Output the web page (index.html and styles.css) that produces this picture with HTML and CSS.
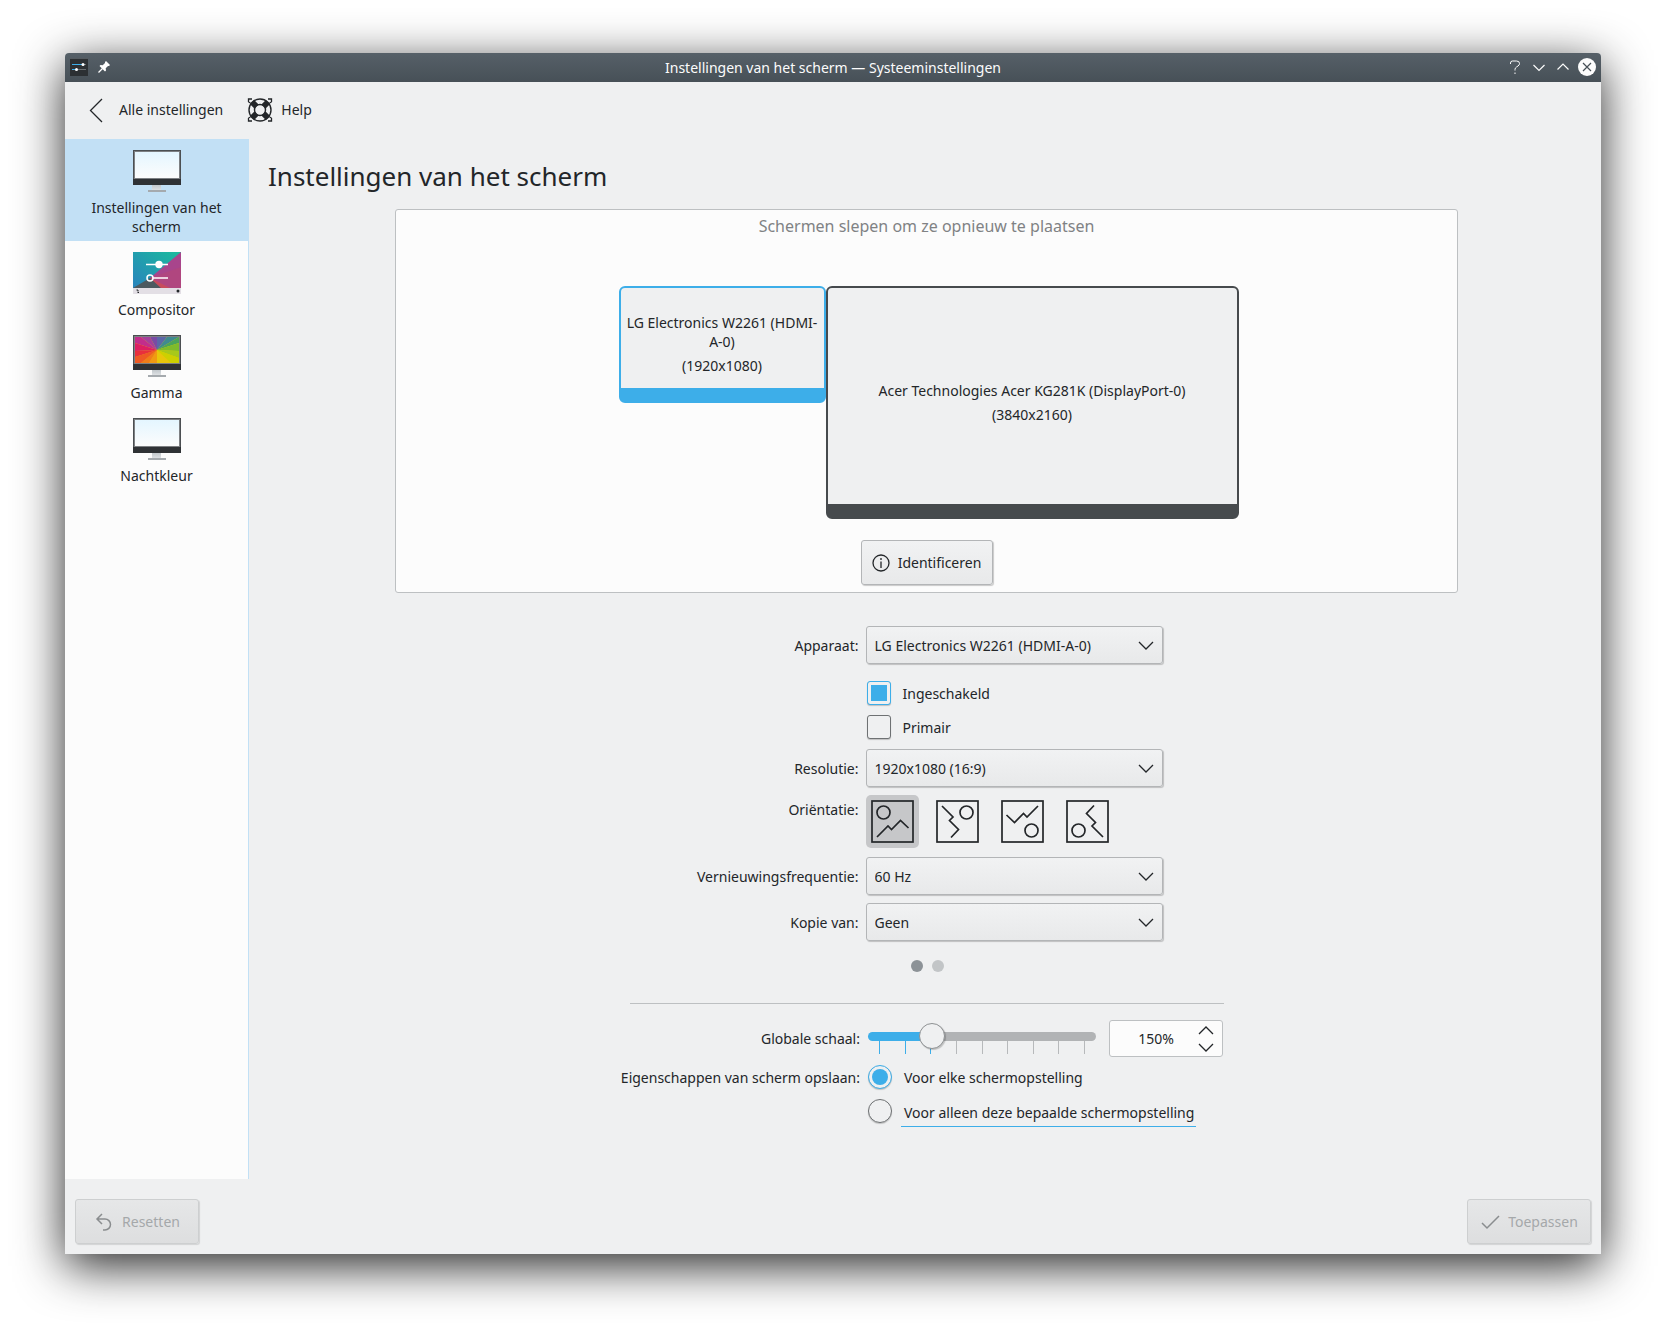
FILE: index.html
```html
<!DOCTYPE html>
<html lang="nl">
<head>
  <meta charset="UTF-8">
  <title>Instellingen van het scherm — Systeeminstellingen</title>
  <link rel="stylesheet" href="styles.css">
</head>
<body>

  <!-- Shared icon shapes -->
  <svg class="defs" aria-hidden="true">
    <defs>
      <linearGradient id="screenGlow" x1="0" y1="0" x2="0" y2="1">
        <stop offset="0" stop-color="#e4f6ff"/>
        <stop offset="1" stop-color="#fcfcfc"/>
      </linearGradient>
      <linearGradient id="stand" x1="0" y1="0" x2="0" y2="1">
        <stop offset="0" stop-color="#bdc3c7"/>
        <stop offset="1" stop-color="#dde0e3"/>
      </linearGradient>
      <linearGradient id="teal" x1="0" y1="1" x2="1" y2="0">
        <stop offset="0" stop-color="#2a7fc0"/>
        <stop offset="1" stop-color="#1abc9c"/>
      </linearGradient>
    </defs>
    <symbol id="monitor" viewBox="0 0 48 48">
      <rect x="19" y="37" width="9" height="6" fill="url(#stand)"/>
      <rect x="15" y="43" width="18" height="2" fill="#a5aaae"/>
      <rect x="0" y="3" width="48" height="35" fill="#2f3235"/>
      <rect x="0" y="3" width="48" height="29" fill="#4b4f52"/>
      <rect x="1" y="4" width="46" height="28" fill="#7d8083"/>
      <rect x="2" y="5" width="44" height="26" fill="url(#screenGlow)"/>
    </symbol>
  </svg>

  <div class="window">
    <header class="titlebar">
      <div class="titlebar-side">
        <svg width="18" height="18" viewBox="0 0 18 18">
          <rect width="18" height="18" fill="#2c3033"/>
          <rect width="18" height="1" fill="#555b60"/>
          <path d="M2 6.500h10M2 11.500h4" stroke="#3daee9" stroke-width="1.200"/>
          <path d="M14 6.500h2M8 11.500h8" stroke="#6a6e71"/>
          <circle cx="13" cy="6.500" r="1.500" fill="#fff"/>
          <circle cx="6.500" cy="11.500" r="1.500" fill="#fff"/>
        </svg>
        <svg width="12" height="12" viewBox="0 0 12 12">
          <path d="M8 0l4 4-1 1-1 0-2.300 2.300.3 2.200-1 1L1.500 5l1-1 2.200.3L7 2V1z" fill="#fff"/>
          <path d="M4.500 7.500L.5 11.500" stroke="#fff" stroke-width="1.200"/>
        </svg>
      </div>
      <div class="titlebar-title">Instellingen van het scherm — Systeeminstellingen</div>
      <div class="titlebar-side titlebar-buttons">
        <button type="button" aria-label="Help">
          <svg width="18" height="18" viewBox="0 0 18 18" fill="none" stroke="#fcfcfc"><path d="M4.500 6V5q0-2 2-2h4q3 0 3 2.500 0 1.500-1.500 2.500l-1.500 1q-1.500.8-1.500 2.500v1M9 14.500v1.500"/></svg>
        </button>
        <button type="button" aria-label="Minimaliseren">
          <svg width="18" height="18" viewBox="0 0 18 18" fill="none" stroke="#fcfcfc" stroke-width="1.200"><path d="M3.500 7L9 12.500 14.500 7"/></svg>
        </button>
        <button type="button" aria-label="Maximaliseren">
          <svg width="18" height="18" viewBox="0 0 18 18" fill="none" stroke="#fcfcfc" stroke-width="1.200"><path d="M3.500 11.500L9 6l5.500 5.500"/></svg>
        </button>
        <button type="button" aria-label="Sluiten">
          <svg width="18" height="18" viewBox="0 0 18 18"><circle cx="9" cy="9" r="9" fill="#fcfcfc"/><path d="M5 5l8 8M13 5l-8 8" stroke="#475057" stroke-width="1.200"/></svg>
        </button>
      </div>
    </header>

    <nav class="toolbar">
      <button type="button" class="tool">
        <svg width="26" height="26" viewBox="0 0 26 26" fill="none" stroke="#232629" stroke-width="1.300"><path d="M17 2L5.500 13.500 17 25"/></svg>
        Alle instellingen
      </button>
      <button type="button" class="tool">
        <svg width="26" height="26" viewBox="0 0 26 26" fill="none" stroke="#232629">
          <circle cx="13" cy="13" r="11" stroke-width="1.400"/>
          <circle cx="13" cy="13" r="5.500" stroke-width="1.400"/>
          <path d="M5 5l4.500 4.500M21 5l-4.500 4.500M21 21l-4.500-4.500M5 21l4.500-4.500" stroke-width="6"/>
          <path d="M1.500 5V2H5M21 2h3.500v3M24.500 21v3H21M5 24H1.500v-3M1.500 5l2 1M24.500 5l-2 1M24.500 21l-2-1M1.500 21l2-1" stroke-width="1.300"/>
        </svg>
        Help
      </button>
    </nav>

    <div class="body">
      <ul class="sidebar">
        <li><a href="#" class="module active">
          <svg width="48" height="48"><use href="#monitor"/></svg>
          Instellingen van het scherm
        </a></li>
        <li><a href="#" class="module">
          <svg width="48" height="48" viewBox="0 0 48 48">
            <rect x="0" y="3" width="48" height="42" fill="url(#teal)"/>
            <path d="M48 3v42H29L17 29z" fill="#a8458c"/>
            <path d="M48 18v27H29L17 29z" fill="#b0467f"/>
            <path d="M17 29l22 11H26z" fill="#c84c5c"/>
            <path d="M0 39l17-10 12 11H0z" fill="#4d5a60"/>
            <rect x="0" y="39" width="48" height="6" fill="#e3dfe5"/>
            <path d="M3.500 41h1.500v1.500M4.500 43.500h1.500" fill="none" stroke="#232629"/>
            <circle cx="45" cy="42" r="1.500" fill="#232629"/>
            <path d="M13 15.500h22M20 29h15" stroke="#fff" stroke-width="1.500"/>
            <circle cx="26" cy="15.500" r="3.700" fill="#fff"/>
            <circle cx="17" cy="29" r="3" fill="none" stroke="#fff" stroke-width="1.500"/>
          </svg>
          Compositor
        </a></li>
        <li><a href="#" class="module">
          <svg width="48" height="48" viewBox="0 0 48 48">
            <use href="#monitor"/>
            <rect x="2" y="5" width="44" height="26" fill="#e9c60a"/>
            <path d="M24 18L2 11V5h6z" fill="#c22d8c"/>
            <path d="M24 18L8 5h9z" fill="#a5409c"/>
            <path d="M24 18L17 5h7z" fill="#7a4aa5"/>
            <path d="M24 18V5h10z" fill="#5b67a8"/>
            <path d="M24 18L34 5h12z" fill="#3f8a90"/>
            <path d="M24 18L46 5v6z" fill="#4ba45a"/>
            <path d="M24 18l22-7v8z" fill="#7fbb2c"/>
            <path d="M24 18l22 1v7z" fill="#a8c81a"/>
            <path d="M24 18l22 8v5H38z" fill="#cdd000"/>
            <path d="M24 18v13h-8z" fill="#f09a12"/>
            <path d="M24 18l-8 13H8z" fill="#ef7d1a"/>
            <path d="M24 18L8 31H2v-6z" fill="#ee5a24"/>
            <path d="M24 18L2 25v-6z" fill="#e8303c"/>
            <path d="M24 18L2 19v-8z" fill="#dd1f63"/>
          </svg>
          Gamma
        </a></li>
        <li><a href="#" class="module">
          <svg width="48" height="48"><use href="#monitor"/></svg>
          Nachtkleur
        </a></li>
      </ul>

      <main class="content">
        <h1>Instellingen van het scherm</h1>

        <section class="preview">
          <p class="hint">Schermen slepen om ze opnieuw te plaatsen</p>
          <div class="outputs">
            <div class="output output-small selected">
              <p>LG Electronics W2261 (HDMI-A-0)</p>
              <p>(1920x1080)</p>
            </div>
            <div class="output output-large">
              <p>Acer Technologies Acer KG281K (DisplayPort-0)</p>
              <p>(3840x2160)</p>
            </div>
          </div>
          <button type="button" class="button identify">
            <svg width="18" height="18" viewBox="0 0 18 18" fill="none" stroke="#232629" stroke-width="1.300"><circle cx="9" cy="9" r="8"/><path d="M9 7.500V14M9 4v2"/></svg>
            Identificeren
          </button>
        </section>

        <form class="output-form">
          <label for="device">Apparaat:</label>
          <select id="device"><option>LG Electronics W2261 (HDMI-A-0)</option></select>

          <div class="checks">
            <label class="option"><input type="checkbox" checked>Ingeschakeld</label>
            <label class="option"><input type="checkbox">Primair</label>
          </div>

          <label for="resolution">Resolutie:</label>
          <select id="resolution"><option>1920x1080 (16:9)</option></select>

          <span class="top-label" id="orientationLabel">Oriëntatie:</span>
          <div class="orientations" role="group" aria-labelledby="orientationLabel">
            <button type="button" class="pressed" aria-label="Normaal">
              <svg width="43" height="43" viewBox="0 0 43 43"><g id="landscape" fill="none" stroke="#232629" stroke-width="1.700"><rect x="1" y="1" width="41" height="41"/><circle cx="12.500" cy="12.500" r="6.500"/><path d="M6 37l11-11 3.500 3.500 9-9 8 7.500"/></g></svg>
            </button>
            <button type="button" aria-label="90° rechtsom">
              <svg width="43" height="43" viewBox="0 0 43 43"><use href="#landscape" transform="rotate(90 21.500 21.500)"/></svg>
            </button>
            <button type="button" aria-label="Ondersteboven">
              <svg width="43" height="43" viewBox="0 0 43 43"><use href="#landscape" transform="rotate(180 21.500 21.500)"/></svg>
            </button>
            <button type="button" aria-label="90° linksom">
              <svg width="43" height="43" viewBox="0 0 43 43"><use href="#landscape" transform="rotate(270 21.500 21.500)"/></svg>
            </button>
          </div>

          <label for="refresh">Vernieuwingsfrequentie:</label>
          <select id="refresh"><option>60 Hz</option></select>

          <label for="replica">Kopie van:</label>
          <select id="replica"><option>Geen</option></select>
        </form>

        <div class="pages">
          <span class="dot current"></span>
          <span class="dot"></span>
        </div>

        <form class="global-form">
          <label for="scale">Globale schaal:</label>
          <div class="scale-row">
            <div class="slider">
              <input type="range" id="scale" min="100" max="300" step="25" value="150">
              <div class="ticks">
                <i class="on"></i><i class="on"></i><i class="on"></i><i></i><i></i><i></i><i></i><i></i><i></i>
              </div>
            </div>
            <div class="spinbox">
              <input type="text" value="150%" aria-label="Schaal">
              <div class="spin-buttons">
                <button type="button" aria-label="Omhoog"><svg width="16" height="9" viewBox="0 0 16 9"><path d="M1 8l7-7 7 7" fill="none" stroke="#232629" stroke-width="1.300"/></svg></button>
                <button type="button" aria-label="Omlaag"><svg width="16" height="9" viewBox="0 0 16 9"><path d="M1 1l7 7 7-7" fill="none" stroke="#232629" stroke-width="1.300"/></svg></button>
              </div>
            </div>
          </div>

          <span class="top-label" id="retentionLabel">Eigenschappen van scherm opslaan:</span>
          <div class="radios" role="radiogroup" aria-labelledby="retentionLabel">
            <label class="option"><input type="radio" name="retention" checked><span>Voor elke schermopstelling</span></label>
            <label class="option"><input type="radio" name="retention"><span class="focused">Voor alleen deze bepaalde schermopstelling</span></label>
          </div>
        </form>
      </main>
    </div>

    <footer class="footer">
      <button type="button" class="button" disabled>
        <svg width="20" height="20" viewBox="0 0 20 20" fill="none" stroke="#8a8d8f" stroke-width="1.500"><path d="M8 2L3 7l5 5M3 7h8a5.500 5.500 0 0 1 0 11H9"/></svg>
        Resetten
      </button>
      <button type="button" class="button" disabled>
        <svg width="20" height="20" viewBox="0 0 20 20" fill="none" stroke="#8a8d8f" stroke-width="1.500"><path d="M2 11l5 5L19 4"/></svg>
        Toepassen
      </button>
    </footer>
  </div>

</body>
</html>
```

FILE: styles.css
```css
* {
  box-sizing: border-box;
}

body {
  margin: 0;
  padding: 53px 65px 77px;
  background-color: #fff;
  color: #232629;
  font-family: "Noto Sans", sans-serif;
  font-size: 14px;
  line-height: 19px;
}

h1, p, ul {
  margin: 0;
  padding: 0;
}

button, input, select {
  font: inherit;
  color: inherit;
}

svg {
  display: block;
  flex: none;
}

.defs {
  position: absolute;
  width: 0;
  height: 0;
}

.window {
  display: flex;
  flex-direction: column;
  min-height: calc(100vh - 130px);
  background-color: #eff0f1;
  border-radius: 4px 4px 0 0;
  box-shadow: 0 12px 48px rgba(0, 0, 0, 0.85);
}

/* Title bar */
.titlebar {
  display: flex;
  align-items: center;
  height: 29px;
  padding: 0 5px 1px;
  border-radius: 4px 4px 0 0;
  background: linear-gradient(#566068, #475057);
  color: #fcfcfc;
}

.titlebar-side {
  display: flex;
  align-items: center;
  gap: 10px;
  width: 120px;
}

.titlebar-title {
  flex: 1;
  text-align: center;
}

.titlebar-buttons {
  justify-content: flex-end;
  gap: 6px;
}

.titlebar-buttons button {
  padding: 0;
  border: none;
  background: none;
}

/* Toolbar */
.toolbar {
  display: flex;
  align-items: center;
  gap: 24px;
  height: 57px;
  padding: 0 20px 2px;
}

.tool {
  display: flex;
  align-items: center;
  gap: 8px;
  padding: 0;
  border: none;
  background: none;
}

.body {
  display: flex;
  flex: 1;
}

/* Sidebar */
.sidebar {
  width: 184px;
  flex: none;
  list-style: none;
  background-color: #fcfcfc;
  border-right: 1px solid #c2e0f5;
}

.module {
  display: flex;
  flex-direction: column;
  align-items: center;
  gap: 3px;
  padding: 8px 20px 5px;
  text-align: center;
  text-decoration: none;
  color: inherit;
}

.module.active {
  background-color: #c2e0f5;
}

/* Content */
.content {
  flex: 1;
  padding: 19px 15px 20px 19px;
}

h1 {
  font-size: 26px;
  line-height: 36px;
  font-weight: normal;
}

.preview {
  display: flex;
  flex-direction: column;
  align-items: center;
  margin: 15px 128px 0 127px;
  padding: 5px 0 7px;
  background-color: #fcfcfc;
  border: 1px solid #bdc0c2;
  border-radius: 3px;
}

.hint {
  font-size: 16px;
  line-height: 22px;
  color: #808284;
}

.outputs {
  display: flex;
  align-items: flex-start;
  margin: 49px 0 21px 4px;
}

.output {
  display: flex;
  flex-direction: column;
  justify-content: center;
  gap: 5px;
  padding: 12px 6px 0;
  background-color: #eff0f1;
  border: 2px solid #464a4d;
  border-bottom-width: 15px;
  border-radius: 6px;
  text-align: center;
}

.output-small {
  width: 207px;
  height: 117px;
}

.output-large {
  width: 413px;
  height: 233px;
}

.output.selected {
  border-color: #3daee9;
}

/* Buttons */
.button {
  display: flex;
  align-items: center;
  justify-content: center;
  gap: 8px;
  height: 45px;
  min-width: 124px;
  padding: 0 10px;
  border: 1px solid #b3b5b7;
  border-radius: 3px;
  background: linear-gradient(#f1f2f3, #e8e9ea);
  box-shadow: 1px 1px 1px rgba(0, 0, 0, 0.2);
}

.button:disabled {
  color: #a5a8aa;
  border-color: #cdcfd0;
  background: linear-gradient(#e6e7e8, #dddedf);
  box-shadow: 1px 1px 1px rgba(0, 0, 0, 0.12);
}

.identify {
  width: 132px;
}

/* Output settings */
.output-form {
  display: grid;
  grid-template-columns: 167px 297px;
  column-gap: 7px;
  row-gap: 8px;
  align-items: center;
  justify-content: center;
  margin-top: 33px;
}

.output-form > label,
.output-form > .top-label,
.global-form > label,
.global-form > .top-label {
  justify-self: end;
  white-space: nowrap;
}

.output-form > .top-label {
  align-self: start;
  padding-top: 5px;
}

select {
  width: 100%;
  height: 38px;
  padding: 0 8px;
  appearance: none;
  border: 1px solid #b3b5b7;
  border-radius: 3px;
  background: url('data:image/svg+xml,<svg xmlns="http://www.w3.org/2000/svg" width="16" height="10" fill="none" stroke="%23232629" stroke-width="1.300"><path d="M1 1l7 7 7-7"/></svg>') no-repeat right 8px top 14px, linear-gradient(#f1f2f3, #e8e9ea);
  box-shadow: 1px 1px 1px rgba(0, 0, 0, 0.2);
}

.checks {
  grid-column: 2;
  display: flex;
  flex-direction: column;
  gap: 10px;
  padding: 9px 1px 2px;
}

.option {
  display: flex;
  align-items: center;
  gap: 12px;
}

input[type="checkbox"],
input[type="radio"] {
  width: 24px;
  height: 24px;
  margin: 0;
  appearance: none;
  border: 1px solid #6e7173;
  border-radius: 3px;
  background-color: #eff0f1;
  box-shadow: 0 1px 1px rgba(0, 0, 0, 0.2);
}

input[type="radio"] {
  border-radius: 50%;
}

input[type="checkbox"]:checked,
input[type="radio"]:checked {
  border-color: #3daee9;
  padding: 3px;
  background-color: #3daee9;
  background-clip: content-box;
}

.orientations {
  display: flex;
  gap: 12px;
  padding-bottom: 1px;
}

.orientations button {
  padding: 5px;
  border: none;
  border-radius: 5px;
  background: none;
}

.orientations .pressed {
  background-color: #c6c7c9;
}

/* Page indicator */
.pages {
  display: flex;
  justify-content: center;
  gap: 9px;
  margin-top: 19px;
}

.dot {
  width: 12px;
  height: 12px;
  border-radius: 50%;
  background-color: #c2c5c7;
}

.dot.current {
  background-color: #8c9297;
}

/* Global settings */
.global-form {
  display: grid;
  grid-template-columns: 230px 1fr;
  column-gap: 8px;
  row-gap: 8px;
  align-items: center;
  width: 594px;
  margin: 31px auto 0;
  padding-top: 16px;
  border-top: 1px solid #bdc0c2;
}

.global-form > .top-label {
  align-self: start;
  padding-top: 3px;
}

.scale-row {
  display: flex;
  align-items: center;
  gap: 13px;
}

.slider {
  width: 228px;
}

input[type="range"] {
  display: block;
  position: relative;
  z-index: 1;
  width: 100%;
  height: 26px;
  margin: 0;
  appearance: none;
  background: none;
}

input[type="range"]::-webkit-slider-runnable-track {
  height: 9px;
  border-radius: 5px;
  background: linear-gradient(to right, #3daee9 63px, #b1b3b5 63px);
}

input[type="range"]::-webkit-slider-thumb {
  appearance: none;
  width: 26px;
  height: 26px;
  margin-top: -9px;
  border: 1px solid #8e9193;
  border-radius: 50%;
  background-color: #eff0f1;
  box-shadow: 1px 1px 1px rgba(0, 0, 0, 0.2);
}

.ticks {
  display: flex;
  justify-content: space-between;
  margin-top: -8px;
  padding: 0 11px;
}

.ticks i {
  width: 1px;
  height: 13px;
  background-color: #b7b9bb;
}

.ticks .on {
  background-color: #3daee9;
}

.spinbox {
  display: flex;
  align-items: center;
  width: 114px;
  height: 37px;
  padding-right: 8px;
  background-color: #fcfcfc;
  border: 1px solid #bdc0c2;
  border-radius: 3px;
}

.spinbox input {
  flex: 1;
  width: 0;
  padding: 0 0 0 4px;
  border: none;
  background: none;
  text-align: center;
}

.spin-buttons {
  display: flex;
  flex-direction: column;
  gap: 8px;
}

.spin-buttons button {
  padding: 0;
  border: none;
  background: none;
}

.radios {
  display: flex;
  flex-direction: column;
  gap: 10px;
}

.focused {
  margin: 0 -2px -7px -3px;
  padding: 0 2px 4px 3px;
  border-bottom: 1px solid #3daee9;
}

/* Footer */
.footer {
  display: flex;
  justify-content: space-between;
  padding: 20px 10px 10px;
}
```
